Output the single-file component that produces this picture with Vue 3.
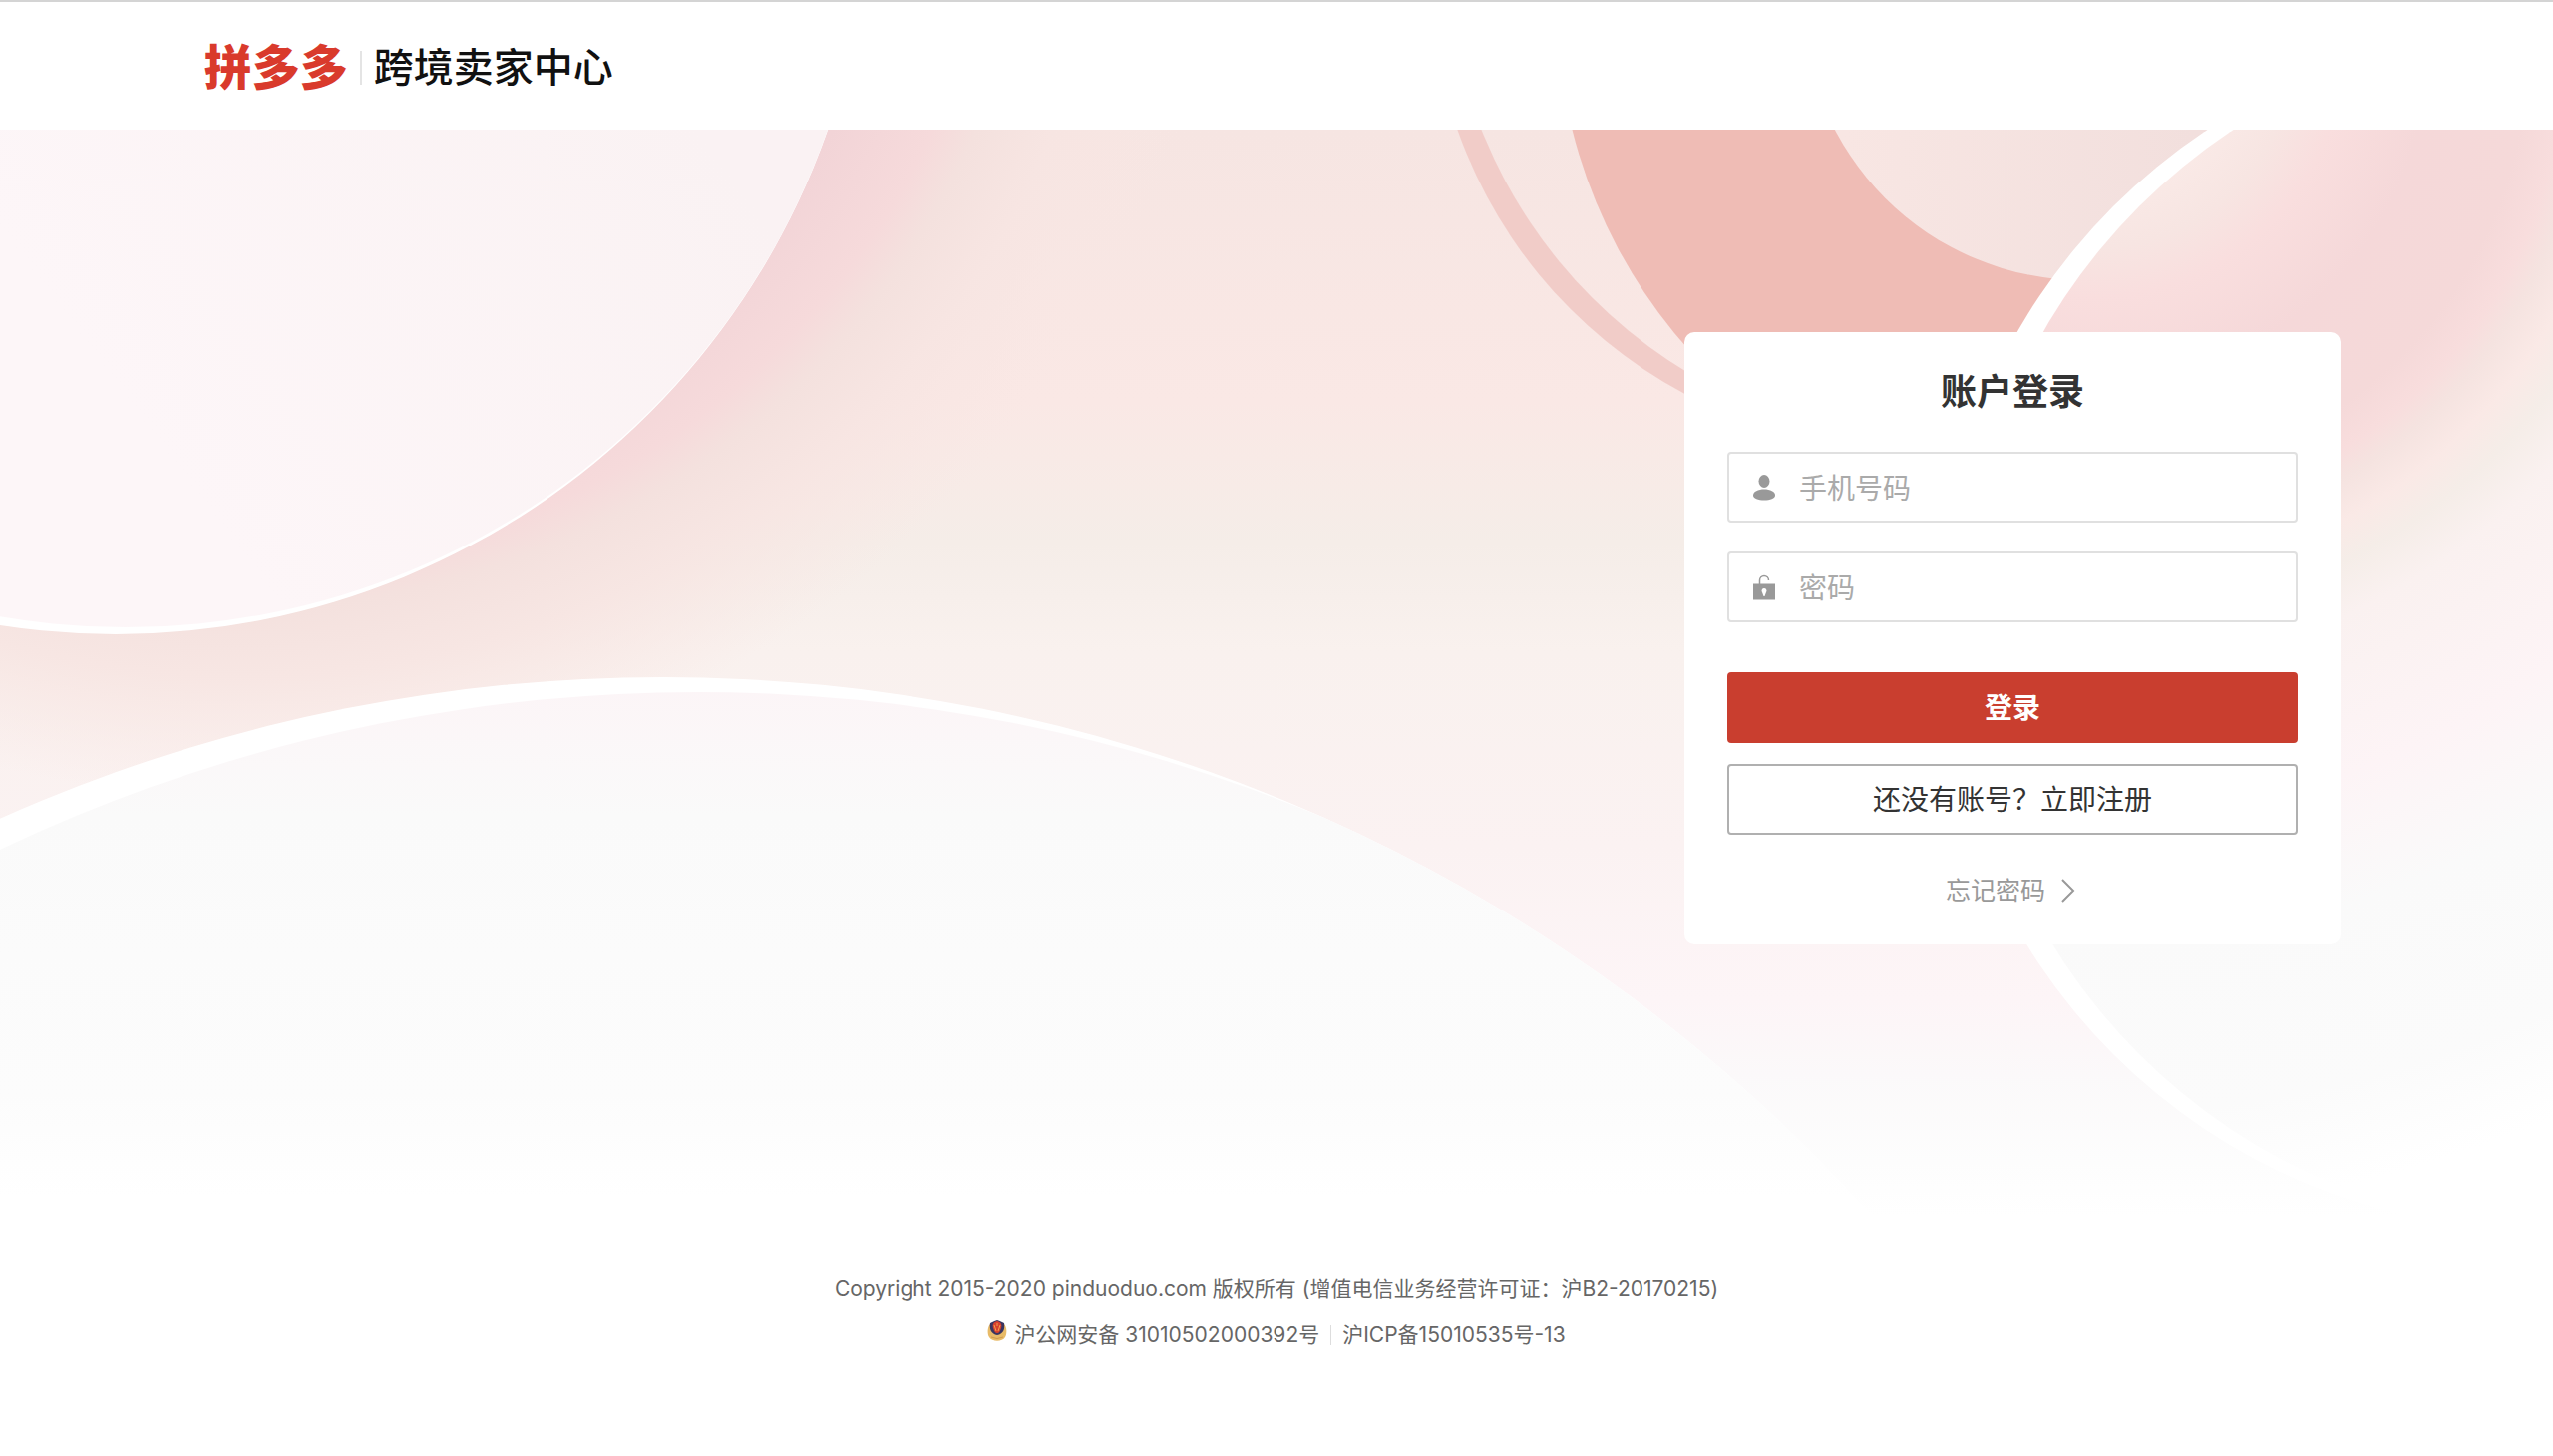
<script setup>
import { ref } from 'vue';

const phone = ref('');
const password = ref('');

function login() {
    if (!phone.value || !password.value) {
        return;
    }
    password.value = '';
}
</script>

<template>
    <div class="page">
        <header class="header">
            <a class="logo" href="#">拼多多</a>
            <span class="line"></span>
            <h1>跨境卖家中心</h1>
        </header>

        <main class="main">
            <svg class="art" viewBox="0 130 2560 1090" preserveAspectRatio="xMidYMin slice" aria-hidden="true">
                <defs>
                    <linearGradient id="base" gradientUnits="userSpaceOnUse" x1="0" y1="130" x2="0" y2="1220">
                        <stop offset="0" stop-color="#f6e5e2" />
                        <stop offset="0.25" stop-color="#fae8e5" />
                        <stop offset="0.38" stop-color="#f5ede8" />
                        <stop offset="0.48" stop-color="#f9f1ee" />
                        <stop offset="0.66" stop-color="#fbf2f2" />
                        <stop offset="0.8" stop-color="#fdf5f7" />
                        <stop offset="0.87" stop-color="#fbf9fa" />
                        <stop offset="0.95" stop-color="#fdfdfd" />
                        <stop offset="1" stop-color="#ffffff" />
                    </linearGradient>
                    <radialGradient id="glow" gradientUnits="userSpaceOnUse" cx="240" cy="-200" r="1000">
                        <stop offset="0.68" stop-color="#f2d4d7" />
                        <stop offset="0.77" stop-color="#f6dadb" />
                        <stop offset="0.81" stop-color="#f4e1de" />
                        <stop offset="0.88" stop-color="#f7e5e2" stop-opacity="0.9" />
                        <stop offset="1" stop-color="#f9e7e4" stop-opacity="0" />
                    </radialGradient>
                    <linearGradient id="sun" gradientUnits="userSpaceOnUse" x1="200" y1="500" x2="700" y2="130">
                        <stop offset="0" stop-color="#fdf6f8" />
                        <stop offset="1" stop-color="#faf2f3" />
                    </linearGradient>
                    <linearGradient id="hill" gradientUnits="userSpaceOnUse" x1="0" y1="690" x2="0" y2="1200">
                        <stop offset="0" stop-color="#fcf5f7" />
                        <stop offset="0.25" stop-color="#fafafa" />
                        <stop offset="0.8" stop-color="#fcfcfc" />
                        <stop offset="1" stop-color="#ffffff" />
                    </linearGradient>
                    <radialGradient id="globe" gradientUnits="userSpaceOnUse" cx="2100" cy="50" r="1240">
                        <stop offset="0" stop-color="#faeae7" />
                        <stop offset="0.11" stop-color="#faeae7" />
                        <stop offset="0.16" stop-color="#f7e5e2" />
                        <stop offset="0.2" stop-color="#f9dede" />
                        <stop offset="0.27" stop-color="#f5d8d9" />
                        <stop offset="0.35" stop-color="#f5d9d9" />
                        <stop offset="0.38" stop-color="#f8dddd" />
                        <stop offset="0.4" stop-color="#f5e3e0" />
                        <stop offset="0.43" stop-color="#fae9e6" />
                        <stop offset="0.46" stop-color="#f5ede8" />
                        <stop offset="0.5" stop-color="#faf1f0" />
                        <stop offset="0.62" stop-color="#fdf4f6" />
                        <stop offset="0.72" stop-color="#fafafa" />
                        <stop offset="0.86" stop-color="#fbfbfb" />
                        <stop offset="0.94" stop-color="#ffffff" />
                    </radialGradient>
                    <linearGradient id="hole" gradientUnits="userSpaceOnUse" x1="1850" y1="0" x2="2200" y2="0">
                        <stop offset="0" stop-color="#f8e6e3" />
                        <stop offset="1" stop-color="#f2dfdd" />
                    </linearGradient>
                    <clipPath id="hillClip"><circle cx="665" cy="2309" r="1630" /></clipPath>
                    <clipPath id="globeClip"><circle cx="2544" cy="632" r="601" /></clipPath>
                    <mask id="ringMask" maskUnits="userSpaceOnUse" x="1400" y="130" width="600" height="400">
                        <circle cx="1915" cy="-30" r="481" fill="#fff" />
                        <circle cx="1950" cy="-55" r="500" fill="#000" />
                    </mask>
                </defs>

                <rect x="0" y="130" width="2560" height="1090" fill="url(#base)" />
                <rect x="0" y="130" width="1300" height="800" fill="url(#glow)" />

                <!-- top left disc -->
                <circle cx="116" cy="-121" r="757" fill="#fff" />
                <circle cx="126" cy="-117" r="746" fill="url(#sun)" />

                <!-- bottom hill -->
                <circle cx="665" cy="2309" r="1630" fill="#fff" />
                <circle cx="700" cy="2324" r="1630" fill="url(#hill)" clip-path="url(#hillClip)" />

                <!-- rings behind the form -->
                <rect x="1400" y="130" width="600" height="400" fill="#f1ccc8" mask="url(#ringMask)" />
                <circle cx="2081" cy="4" r="520" fill="#efbcb5" />
                <circle cx="2089" cy="0" r="281" fill="url(#hole)" />

                <!-- right globe -->
                <circle cx="2544" cy="632" r="601" fill="#fff" />
                <circle cx="2570" cy="632" r="601" fill="url(#globe)" clip-path="url(#globeClip)" />
            </svg>

            <form class="card" @submit.prevent="login">
                <h2>账户登录</h2>

                <label class="field">
                    <svg class="icon" viewBox="0 0 22 26" aria-hidden="true">
                        <ellipse cx="11" cy="6.500" rx="5.500" ry="6.500" />
                        <path d="M0 20.500C0 17 5 14.500 11 14.500S22 17 22 20.500C22 24 17 25.500 11 25.500S0 24 0 20.500Z" />
                    </svg>
                    <input v-model="phone" type="text" placeholder="手机号码" aria-label="手机号码" />
                </label>

                <label class="field">
                    <svg class="icon" viewBox="0 0 22 26" aria-hidden="true">
                        <path d="M6.500 10V6a4.500 4.500 0 0 1 9 0" fill="none" stroke="#999" stroke-width="1.500" />
                        <path fill-rule="evenodd" d="M0 9.500H22V25.500H0ZM11 14a2.500 2.500 0 0 0-2 4l1.500 4h1l1.500-4a2.500 2.500 0 0 0-2-4Z" />
                    </svg>
                    <input v-model="password" type="password" placeholder="密码" aria-label="密码" />
                </label>

                <button class="btn login" type="submit">登录</button>
                <button class="btn register" type="button">还没有账号？立即注册</button>

                <a class="forgot" href="#">
                    忘记密码
                    <svg class="arrow" viewBox="0 0 18 24" aria-hidden="true">
                        <path d="M1 1L12 12L1 23" fill="none" stroke="#999" stroke-width="2" />
                    </svg>
                </a>
            </form>
        </main>

        <footer class="footer">
            <p>Copyright 2015-2020 pinduoduo.com 版权所有 (增值电信业务经营许可证：沪B2-20170215)</p>
            <p class="records">
                <svg class="badge" viewBox="0 0 20 22" aria-hidden="true">
                    <path d="M3 4C0 7 0 14 2 17C5 22 15 22 18 17C20 14 20 7 17 4Z" fill="#e8bb68" />
                    <path d="M10 0C13 1 15 2 17 3C18 9 16 14 10 15C4 14 2 9 3 3C5 2 7 1 10 0Z" fill="#3a3560" />
                    <path d="M10 1C14 2 15 5 14 8C13 11 12 13 10 13C8 13 7 11 6 8C5 5 6 2 10 1Z" fill="#d8402e" />
                    <path d="M7 5L9 11M13 5L11 11M10 3V6" stroke="#f0a04a" stroke-width="1" />
                    <path d="M4 17Q10 20 16 17" fill="none" stroke="#d09a4c" stroke-width="1" />
                </svg>
                <a href="#">沪公网安备 31010502000392号</a>
                <span class="bar"></span>
                <a href="#">沪ICP备15010535号-13</a>
            </p>
        </footer>
    </div>
</template>

<style>
body {
    margin: 0;
    background: white;
}
</style>

<style scoped>
.page {
    min-height: 100vh;
    box-sizing: border-box;
    border-top: 2px solid #d4d4d4;
    font-family: Inter, "Noto Sans CJK SC", sans-serif;
    color: #333;
}

.header {
    display: flex;
    align-items: center;
    box-sizing: border-box;
    height: 128px;
    padding: 4px 8% 0;
    background: white;
}

.logo {
    font-size: 48px;
    line-height: 64px;
    font-weight: 900;
    color: #d93a2c;
    text-decoration: none;
}

.line {
    width: 2px;
    height: 34px;
    margin: 0 12px;
    background: #e4e4e4;
}

h1 {
    margin: 0;
    font-size: 40px;
    line-height: 64px;
    font-weight: 500;
    color: #111;
}

.main {
    position: relative;
    display: flex;
    justify-content: flex-end;
    padding: 203px 213px 272px;
}

.art {
    position: absolute;
    top: 0;
    left: 0;
    width: 100%;
    height: 100%;
}

.card {
    position: relative;
    display: flex;
    flex-direction: column;
    box-sizing: border-box;
    width: 658px;
    padding: 32px 43px 32px;
    background: white;
    border-radius: 10px;
}

h2 {
    margin: 0 0 32px;
    font-size: 36px;
    line-height: 56px;
    font-weight: 600;
    text-align: center;
}

.field {
    display: flex;
    align-items: center;
    box-sizing: border-box;
    height: 71px;
    margin-bottom: 29px;
    padding: 0 24px;
    border: 2px solid #e0e0e0;
    border-radius: 4px;
}

.icon {
    flex: none;
    width: 22px;
    height: 26px;
    fill: #999;
}

.field input {
    flex: 1;
    min-width: 0;
    margin-left: 24px;
    padding: 2px 0 0;
    border: none;
    outline: none;
    background: transparent;
    font-family: inherit;
    font-size: 28px;
    color: #333;
}

.field input::placeholder {
    color: #aaa;
}

.btn {
    height: 71px;
    padding: 0 0 3px;
    border: none;
    border-radius: 4px;
    font-family: inherit;
    font-size: 28px;
    cursor: pointer;
}

.btn.login {
    margin: 21px 0;
    background: #c93e2f;
    color: white;
    font-weight: 700;
}

.btn.register {
    background: white;
    border: 2px solid #b0b0b0;
    color: #333;
}

.forgot {
    display: flex;
    align-items: center;
    justify-content: center;
    gap: 16px;
    margin-top: 34px;
    font-size: 25px;
    line-height: 44px;
    color: #999;
    text-decoration: none;
}

.arrow {
    width: 18px;
    height: 24px;
}

.footer {
    padding: 51px 0 47px;
    font-size: 21px;
    line-height: 46px;
    text-align: center;
    color: #666;
}

.footer p {
    margin: 0;
}

.footer a {
    color: #666;
    text-decoration: none;
}

.records {
    display: flex;
    align-items: center;
    justify-content: center;
}

.badge {
    width: 20px;
    height: 22px;
    margin-right: 7px;
    margin-bottom: 8px;
}

.bar {
    width: 1px;
    height: 20px;
    margin: 0 11px;
    background: #ddd;
}
</style>
